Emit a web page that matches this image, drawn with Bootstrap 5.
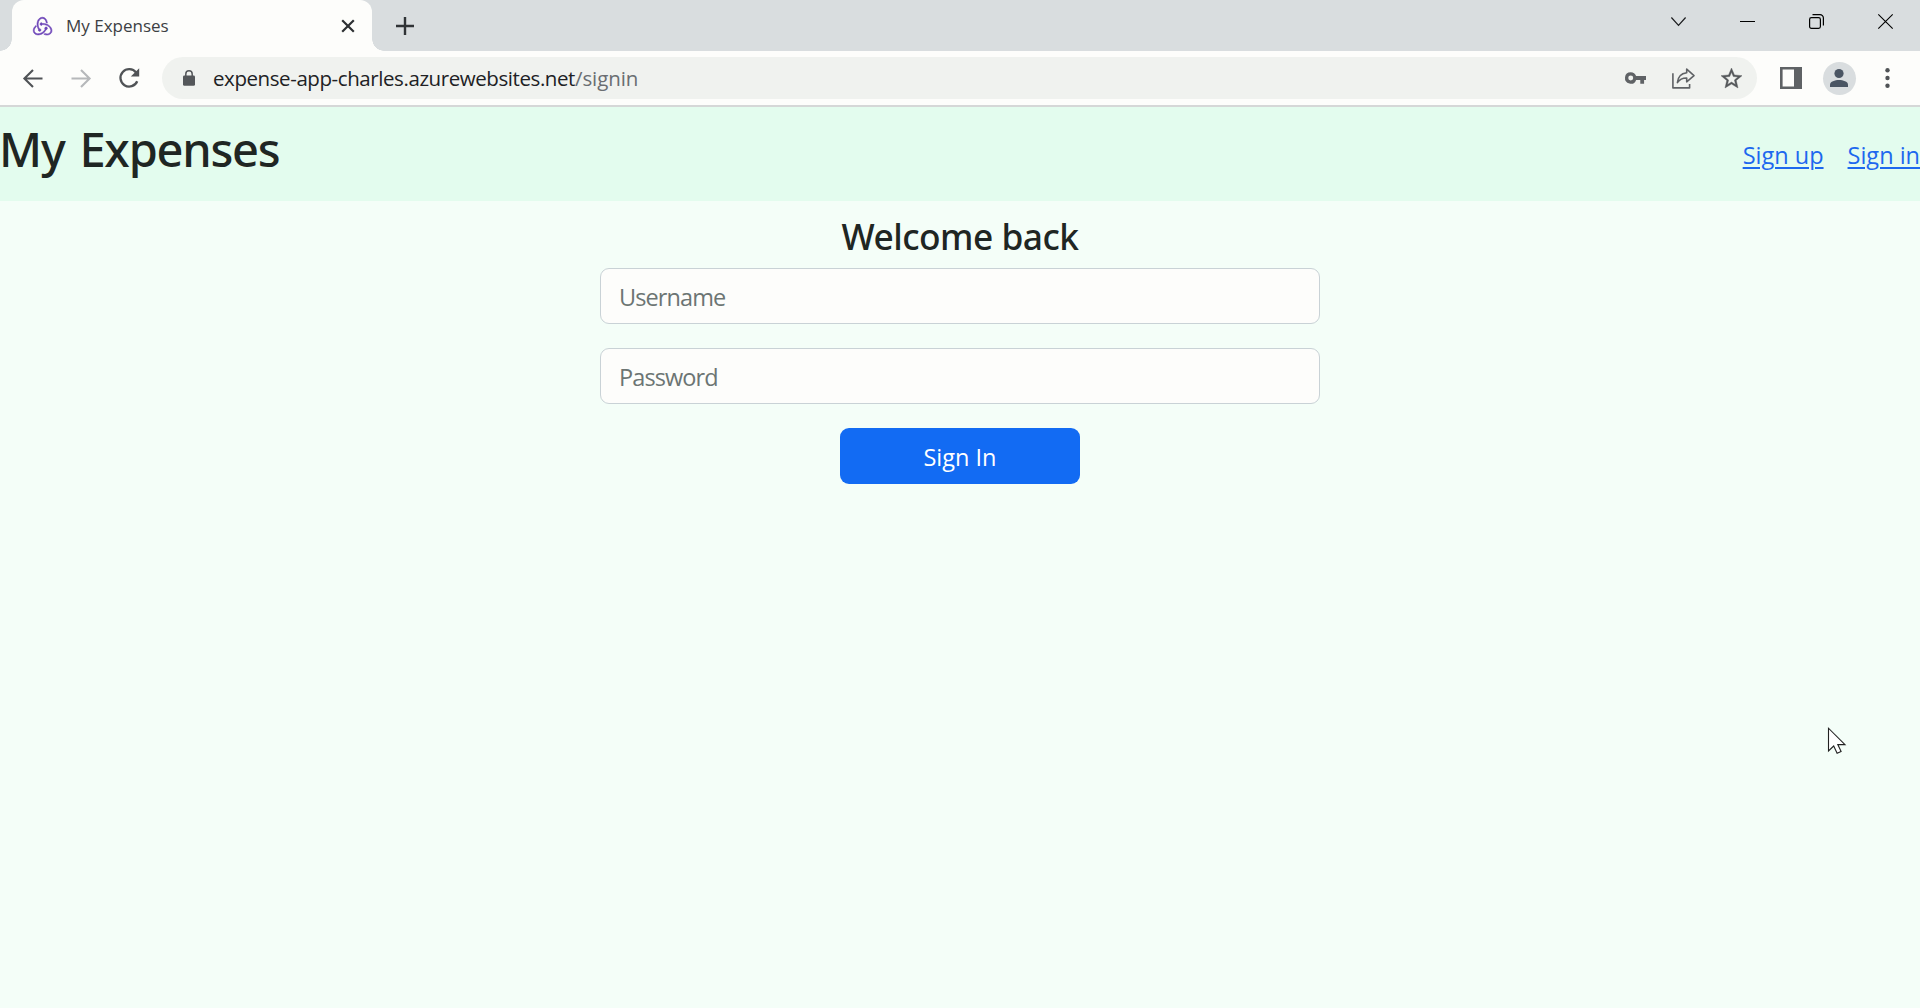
<!DOCTYPE html>
<html lang="en">
<head>
<meta charset="utf-8">
<meta name="viewport" content="width=device-width, initial-scale=1">
<title>My Expenses</title>
<link href="https://cdn.jsdelivr.net/npm/bootstrap@5.3.0/dist/css/bootstrap.min.css" rel="stylesheet">
<style>
  body { background: #f4fef8; font-family: "Open Sans", "Noto Sans", sans-serif; height: 1008px; overflow: hidden; }
  svg { display: block; overflow: visible; }
  .tab-strip { height: 51px; background: #d9dddf; }
  .browser-tab { width: 360px; height: 51px; margin-left: 12px; padding: 0 17px 0 20px; background: #fdfdfb; border-radius: 12px 12px 0 0; }
  .browser-tab::before, .browser-tab::after { content: ""; position: absolute; bottom: 0; width: 12px; height: 12px; }
  .browser-tab::before { left: -12px; background: radial-gradient(circle at 0 0, transparent 11.5px, #fdfdfb 12px); }
  .browser-tab::after { right: -12px; background: radial-gradient(circle at 100% 0, transparent 11.5px, #fdfdfb 12px); }
  .tab-title { font-size: 17px; line-height: 24px; color: #3c4043; margin-left: 13px; }
  .win-cell { width: 69px; height: 43px; }
  .tool-strip { height: 56px; background: #fdfdfb; border-bottom: 2px solid #d5d7d7; padding: 0 9px; }
  .tool-cell { width: 48px; height: 42px; }
  .omnibox { height: 42px; margin: 0 10px 0 9px; padding: 0 2px 0 15px; border-radius: 21px; background: #f0f2ef; }
  .lock-cell { width: 24px; }
  .address { font-size: 20.5px; line-height: 30px; margin-left: 12px; letter-spacing: -.42px; color: #202124; }
  .address-path { color: #6a6e72; letter-spacing: -.1px; }
  .avatar { width: 33px; height: 33px; background: #d9dddf; }
  .app-header { height: 94px; background: #e3fcee; padding-top: 13px; }
  .app-title { font: 500 47px/58px "Noto Sans", sans-serif; letter-spacing: -1.25px; word-spacing: 4px; color: #1f2623; margin-left: -1px; }
  .app-nav { gap: 24px; font-size: 23.5px; line-height: 36px; margin-top: 17px; }
  .app-nav a { color: #1d68ee; text-decoration-thickness: 2px; text-underline-offset: 3px; }
  .signin-form { width: 720px; padding-top: 12px; }
  .form-title { font: 500 35.3px/39px "Noto Sans", sans-serif; letter-spacing: -.5px; color: #1f2623; margin-bottom: 12px; }
  .signin-form .form-control { height: 56px; padding: 1px 18px 0; font-size: 23.5px; letter-spacing: -.9px; border-radius: 9px; border-color: #c9d2d6; background: #fdfdfb; margin-bottom: 24px; }
  .signin-form .form-control::placeholder { color: #6c7573; }
  .signin-btn { width: 240px; height: 56px; font-size: 23.5px; line-height: 36px; padding: 1px 0 0; border-radius: 9px; background: #126bf3; border: 0; }
  .pointer { left: 1827px; top: 727px; }
</style>
<script src="https://cdn.jsdelivr.net/npm/bootstrap@5.3.0/dist/js/bootstrap.bundle.min.js"></script>
</head>
<body>
<div class="tab-strip d-flex">
  <div class="browser-tab position-relative d-flex align-items-center">
    <svg width="21" height="20" viewBox="6 8 88 84" fill="#6d45b8" stroke="#6d45b8" stroke-width="2.5"><path d="M65.6 65.4c2.9-.3 5.1-2.8 5-5.8-.1-3-2.6-5.4-5.6-5.4h-.2c-3.1.1-5.5 2.7-5.4 5.8.1 1.5.7 2.8 1.6 3.7-3.4 6.7-8.6 11.6-16.4 15.7-5.3 2.8-10.8 3.8-16.3 3.1-4.5-.6-8-2.6-10.2-5.9-3.2-4.9-3.5-10.2-.8-15.5 1.9-3.8 4.9-6.6 6.8-8-.4-1.3-1-3.5-1.3-5.1-14.5 10.5-13 24.7-8.6 31.4 3.3 5 10 8.1 17.4 8.1 2 0 4-.2 6-.7 12.8-2.5 22.5-10.1 28-21.400z"/><path d="M83.2 53c-7.6-8.9-18.8-13.8-31.6-13.8H50c-.9-1.8-2.8-3-4.9-3h-.2c-3.1.1-5.5 2.7-5.4 5.8.1 3 2.6 5.4 5.6 5.4h.2c2.2-.1 4.1-1.5 4.900-3.400H52c7.600 0 14.800 2.200 21.300 6.500 5 3.300 8.600 7.600 10.600 12.800 1.700 4.200 1.600 8.300-.2 11.800-2.800 5.300-7.500 8.200-13.700 8.200-4 0-7.800-1.200-9.800-2.100-1.100 1-3.100 2.600-4.500 3.600 4.300 2 8.700 3.100 12.900 3.100 9.600 0 16.700-5.300 19.400-10.600 2.900-5.800 2.700-15.800-4.800-24.300z"/><path d="M32.4 67.1c.1 3 2.6 5.4 5.6 5.400h.2c3.100-.1 5.500-2.700 5.400-5.800-.1-3-2.600-5.400-5.600-5.400h-.2c-.2 0-.5 0-.7.1-4.100-6.800-5.800-14.200-5.200-22.200.4-6 2.400-11.200 5.900-15.500 2.900-3.700 8.500-5.500 12.300-5.600 10.600-.2 15.100 13 15.400 18.300 1.300.3 3.500 1 5 1.500-1.200-16.200-11.200-24.600-20.800-24.600-9 0-17.300 6.500-20.600 16.100-4.600 12.800-1.600 25.100 4 34.800-.5.7-.8 1.800-.7 2.900z"/></svg>
    <span class="tab-title">My Expenses</span>
    <svg class="ms-auto" width="14" height="14" viewBox="0 0 14 14" stroke="#2d3033" stroke-width="2.2" fill="none"><path d="M1.2 1.2 12.8 12.8M12.8 1.2 1.2 12.8"/></svg>
  </div>
  <div class="d-flex align-items-center ms-4">
    <svg width="18" height="18" viewBox="0 0 18 18" stroke="#303336" stroke-width="2.4" fill="none"><path d="M9 0v18M0 9h18"/></svg>
  </div>
  <div class="d-flex ms-auto">
    <div class="win-cell d-flex align-items-center justify-content-center"><svg width="15" height="9" viewBox="0 0 15 9" fill="none" stroke="#1b1c1e" stroke-width="1.2"><path d="M.4.5 7.5 8.3 14.6.5"/></svg></div>
    <div class="win-cell d-flex align-items-center justify-content-center"><svg width="15" height="1" viewBox="0 0 15 1"><path fill="#000" d="M0 0h15v1H0z"/></svg></div>
    <div class="win-cell d-flex align-items-center justify-content-center"><svg width="15" height="15" viewBox="0 0 15 15" fill="none" stroke="#000" stroke-width="1.2"><rect x=".6" y="3.6" width="10.8" height="10.8" rx="1.8"/><path d="M3.5.6H11A3.4 3.4 0 0 1 14.4 4v7.5"/></svg></div>
    <div class="win-cell d-flex align-items-center justify-content-center"><svg width="15" height="15" viewBox="0 0 15 15" fill="none" stroke="#000" stroke-width="1.1"><path d="M.3.3 14.7 14.7M14.7.3.3 14.7"/></svg></div>
  </div>
</div>
<div class="tool-strip d-flex align-items-center">
  <div class="tool-cell d-flex align-items-center justify-content-center"><svg width="20" height="19" viewBox="0 0 20 19" fill="none" stroke="#505356" stroke-width="2.1"><path d="M19.5 9.5H1.8M10 .9 1.4 9.5 10 18.1"/></svg></div>
  <div class="tool-cell d-flex align-items-center justify-content-center"><svg width="20" height="19" viewBox="0 0 20 19" fill="none" stroke="#b6b8ba" stroke-width="2.1"><path d="M.5 9.5h17.7M10 .9l8.6 8.6L10 18.1"/></svg></div>
  <div class="tool-cell d-flex align-items-center justify-content-center"><svg width="21" height="20" viewBox="0 0 21 20"><path fill="none" stroke="#505356" stroke-width="2.3" d="M17.1 4.6A8.7 8.7 0 1 0 18.2 13.2"/><path fill="#505356" d="M20.2.3v8.2h-8.4z"/></svg></div>
  <div class="omnibox flex-grow-1 d-flex align-items-center">
    <div class="lock-cell d-flex justify-content-center"><svg width="12" height="16" viewBox="0 0 12 16"><rect y="5.6" width="12" height="10.2" rx="1.4" fill="#54575a"/><path d="M2.8 6.5V4a3.2 3.2 0 0 1 6.4 0v2.5" fill="none" stroke="#54575a" stroke-width="1.5"/></svg></div>
    <div class="address">expense-app-charles.azurewebsites.net<span class="address-path">/signin</span></div>
    <div class="d-flex ms-auto">
      <div class="tool-cell d-flex align-items-center justify-content-center"><svg width="21" height="12" viewBox="1 6 22 12"><path fill="#5f6265" d="M12.65 10A6 6 0 0 0 7 6a6 6 0 1 0 5.65 8H17v4h4v-4h2v-4H12.65zM7 14.6A2.6 2.6 0 1 1 7 9.4a2.6 2.6 0 0 1 0 5.2z"/></svg></div>
      <div class="tool-cell d-flex align-items-center justify-content-center"><svg width="23" height="21" viewBox="0 0 23 21" fill="none" stroke="#5f6265" stroke-width="1.6" stroke-linejoin="round"><path d="M.9 5.3V19.9H17.6V16"/><path d="M14.7 1.1 22 7.6l-7.3 6.2V10c-4.600-.1-7.200 1.500-9.300 4.600.4-5.200 3.100-9.100 9.300-9.900z"/></svg></div>
      <div class="tool-cell d-flex align-items-center justify-content-center"><svg width="21" height="20" viewBox="2 2 20 19"><path fill="#54575a" stroke="#54575a" stroke-width=".4" d="m22 9.240-7.190-.62L12 2 9.190 8.630 2 9.240l5.460 4.730L5.820 21 12 17.270 18.180 21l-1.630-7.030L22 9.240zM12 15.400l-3.760 2.270 1-4.280-3.320-2.880 4.380-.38L12 6.100l1.710 4.040 4.380.38-3.320 2.880 1 4.280L12 15.400z"/></svg></div>
    </div>
  </div>
  <div class="tool-cell d-flex align-items-center justify-content-center"><svg width="22" height="22" viewBox="0 0 22 22"><path fill="#5f6265" fill-rule="evenodd" d="M0 0h22v22H0zM2.600 2.600v16.800h11.400V2.600z"/></svg></div>
  <div class="tool-cell d-flex align-items-center justify-content-center"><div class="avatar rounded-circle d-flex align-items-center justify-content-center"><svg width="18" height="18" viewBox="0 0 18 18" fill="#4a5563"><circle cx="9" cy="4.500" r="4.600"/><path d="M0 18v-2.300c0-3.200 5-4.700 9-4.700s9 1.500 9 4.700V18z"/></svg></div></div>
  <div class="tool-cell d-flex align-items-center justify-content-center"><svg width="5" height="20" viewBox="0 0 5 20" fill="#505356"><circle cx="2.500" cy="2.300" r="2.200"/><circle cx="2.500" cy="10" r="2.200"/><circle cx="2.500" cy="17.700" r="2.200"/></svg></div>
</div>
<header class="app-header d-flex justify-content-between align-items-start">
  <h1 class="app-title mb-0">My Expenses</h1>
  <nav class="app-nav d-flex"><a href="#">Sign up</a><a href="#">Sign in</a></nav>
</header>
<main class="signin-form mx-auto">
  <h2 class="form-title text-center mt-1">Welcome back</h2>
  <form>
    <input class="form-control" type="text" placeholder="Username">
    <input class="form-control" type="password" placeholder="Password">
    <button class="signin-btn btn btn-primary d-block mx-auto" type="button">Sign In</button>
  </form>
</main>
<svg class="pointer position-absolute" width="20" height="28" viewBox="0 0 20 28"><path d="M1.500 1.200V24l5.200-5 3.400 7.200 4-1.800-3.300-6.800H18z" fill="#fff" stroke="#222" stroke-width="1.100"/></svg>
</body>
</html>
